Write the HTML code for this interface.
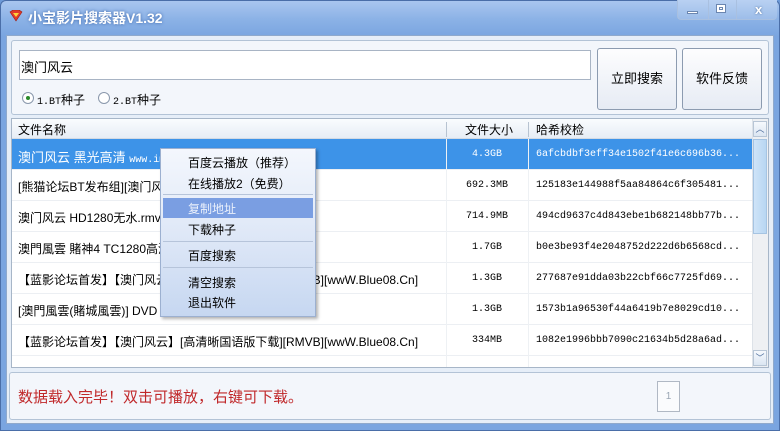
<!DOCTYPE html>
<html><head><meta charset="utf-8"><style>
*{margin:0;padding:0;box-sizing:border-box}
body{width:780px;height:431px;overflow:hidden;background:#6d9ad8;font-family:"Liberation Sans","Noto Sans CJK SC",sans-serif;font-size:12px;color:#000;position:relative}
.abs{position:absolute}
#win{left:0;top:0;width:780px;height:431px;border-radius:6px 6px 0 0;background:linear-gradient(#a9c6ef 0,#8cb2e6 18px,#7aa5e0 36px,#7aa5e0 100%);border:1px solid #4a6ea8}
#title{left:28px;top:8px;color:#fff;font-weight:bold;font-size:14px;text-shadow:0 0 3px #3a64a8}
#client{left:6px;top:35px;width:768px;height:389px;background:#e6eef8;border:1px solid #8fa9cc}
.panel{background:#f3f6fb;border:1px solid #b3c3d6;border-radius:3px}
.btn{background:linear-gradient(#fdfdfe,#e6ebf4);border:1px solid #8c9bb0;border-radius:3px;font-size:13px;text-align:center;line-height:60px}
.row{left:12px;width:740px;height:31px;border-bottom:1px solid #eceff3;background:#fff}
.row span{position:absolute;top:8px;white-space:nowrap}
.c1{left:6px}.c2{left:434px;width:82px;text-align:center;font-family:"Liberation Mono",monospace;font-size:10px;top:10px!important}
.c3{left:524px;font-family:"Liberation Mono",monospace;font-size:10px;top:10px!important}
.sel{background:#3d93e8;color:#fff}
.m{left:27px;font-size:12px;position:absolute}
</style></head><body>
<div id="win" class="abs"></div>
<svg class="abs" style="left:9px;top:10px" width="14" height="12" viewBox="0 0 14 12"><path d="M1 2 L4 0 H10 L13 2 L7 11 Z" fill="#e03a2a" stroke="#9a1a10" stroke-width=".6"/><path d="M4 3 H10 L7 7 Z" fill="#ffd23a"/></svg>
<div id="title" class="abs">小宝影片搜索器V1.32</div>
<div class="abs" style="left:677px;top:0;width:100px;height:20px;border-left:1px solid #a9c0e0;border-bottom:1px solid #a9c0e0;border-radius:0 0 4px 4px;background:linear-gradient(#b9d1f2,#9dbde9)"></div>
<div class="abs" style="left:708px;top:0;width:1px;height:20px;background:#a9c0e0"></div>
<div class="abs" style="left:736px;top:0;width:1px;height:20px;background:#a9c0e0"></div>
<div class="abs" style="left:687px;top:11px;width:11px;height:3px;background:#fff;border:1px solid #6b86b0"></div>
<div class="abs" style="left:716px;top:4px;width:10px;height:9px;border:1px solid #6b86b0;background:#fff"><div style="margin:2px;width:4px;height:3px;border:1px solid #6b86b0"></div></div>
<div class="abs" style="left:755px;top:2px;color:#fff;font-weight:bold;font-size:13px;text-shadow:0 0 2px #50709f">x</div>
<div id="client" class="abs"></div>
<div class="abs panel" style="left:11px;top:40px;width:758px;height:75px"></div>
<div class="abs" style="left:19px;top:50px;width:572px;height:30px;background:#fff;border:1px solid #a8b4c4"></div>
<div class="abs" style="left:21px;top:57px;font-size:13px">澳门风云</div>
<div class="abs" style="left:22px;top:92px;width:12px;height:12px;border-radius:50%;border:1px solid #8a98ac;background:#fff"><div style="margin:3px;width:4px;height:4px;border-radius:50%;background:#2a8a2a"></div></div>
<div class="abs" style="left:37px;top:91px;font-size:12px"><span style="font-family:'Liberation Mono';font-size:10px">1.BT</span>种子</div>
<div class="abs" style="left:98px;top:92px;width:12px;height:12px;border-radius:50%;border:1px solid #8a98ac;background:#fff"></div>
<div class="abs" style="left:113px;top:91px;font-size:12px"><span style="font-family:'Liberation Mono';font-size:10px">2.BT</span>种子</div>
<div class="abs btn" style="left:597px;top:48px;width:80px;height:62px">立即搜索</div>
<div class="abs btn" style="left:682px;top:48px;width:80px;height:62px">软件反馈</div>
<div class="abs" style="left:11px;top:118px;width:758px;height:250px;background:#fff;border:1px solid #a7b6c8"></div>
<div class="abs" style="left:12px;top:119px;width:740px;height:20px;background:linear-gradient(#fafcfe,#e7edf5);border-bottom:1px solid #d2dae4"></div>
<div class="abs" style="left:18px;top:121px">文件名称</div>
<div class="abs" style="left:446px;top:122px;width:1px;height:15px;background:#b7c3d1"></div>
<div class="abs" style="left:465px;top:121px">文件大小</div>
<div class="abs" style="left:528px;top:122px;width:1px;height:15px;background:#b7c3d1"></div>
<div class="abs" style="left:536px;top:121px">哈希校检</div>
<div class="abs row sel" style="top:139px"><span class="c1" style="font-size:13px">澳门风云 黑光高清 <span style="position:static;font-family:'Liberation Mono';font-size:10px">www.im</span></span><span class="c2">4.3GB</span><span class="c3">6afcbdbf3eff34e1502f41e6c696b36...</span></div>
<div class="abs row" style="top:170px"><span class="c1">[熊猫论坛BT发布组][澳门风</span><span class="c2">692.3MB</span><span class="c3">125183e144988f5aa84864c6f305481...</span></div>
<div class="abs row" style="top:201px"><span class="c1">澳门风云 HD1280无水.rmvb</span><span class="c2">714.9MB</span><span class="c3">494cd9637c4d843ebe1b682148bb77b...</span></div>
<div class="abs row" style="top:232px"><span class="c1">澳門風雲 賭神4 TC1280高清</span><span class="c2">1.7GB</span><span class="c3">b0e3be93f4e2048752d222d6b6568cd...</span></div>
<div class="abs row" style="top:263px"><span class="c1">【蓝影论坛首发】【澳门风云】[高清晰国语版下载][RMVB][wwW.Blue08.Cn]</span><span class="c2">1.3GB</span><span class="c3">277687e91dda03b22cbf66c7725fd69...</span></div>
<div class="abs row" style="top:294px"><span class="c1">[澳門風雲(賭城風雲)] DVD</span><span class="c2">1.3GB</span><span class="c3">1573b1a96530f44a6419b7e8029cd10...</span></div>
<div class="abs row" style="top:325px"><span class="c1">【蓝影论坛首发】【澳门风云】[高清晰国语版下载][RMVB][wwW.Blue08.Cn]</span><span class="c2">334MB</span><span class="c3">1082e1996bbb7090c21634b5d28a6ad...</span></div>
<div class="abs" style="left:446px;top:139px;width:1px;height:228px;background:#eef1f4"></div>
<div class="abs" style="left:528px;top:139px;width:1px;height:228px;background:#eef1f4"></div>
<div class="abs" style="left:752px;top:119px;width:16px;height:248px;background:#eef0f3;border-left:1px solid #dde2e8"></div>
<div class="abs" style="left:753px;top:121px;width:14px;height:16px;background:linear-gradient(#f6f9fd,#dbe6f2);border:1px solid #b8c6d6;font-size:9px;text-align:center;color:#4a6a9a;line-height:14px">︿</div>
<div class="abs" style="left:753px;top:139px;width:14px;height:95px;background:linear-gradient(90deg,#cfe4f8,#b8d6f2);border:1px solid #a6c4e2"></div>
<div class="abs" style="left:753px;top:350px;width:14px;height:16px;background:linear-gradient(#f6f9fd,#dbe6f2);border:1px solid #b8c6d6;font-size:9px;text-align:center;color:#4a6a9a;line-height:14px">﹀</div>
<div class="abs panel" style="left:9px;top:372px;width:762px;height:48px"></div>
<div class="abs" style="left:18px;top:386px;font-size:15px;color:#c0282a">数据载入完毕！双击可播放，右键可下载。</div>
<div class="abs" style="left:657px;top:381px;width:23px;height:31px;border:1px solid #b0b8c4;background:#fafbfd;color:#9aa6b4;font-size:10px;text-align:center;line-height:29px">1</div>
<div class="abs" style="left:160px;top:148px;width:156px;height:169px;background:linear-gradient(#f4f7fd,#dfe8f7 50%,#c6d7f1);border:1px solid #9cb0d0;box-shadow:2px 2px 3px rgba(0,0,0,.3)">
<div class="m" style="top:5px">百度云播放（推荐）</div>
<div class="m" style="top:26px">在线播放2（免费）</div>
<div style="position:absolute;left:2px;top:45px;width:150px;height:1px;background:#b6c4da"></div>
<div style="position:absolute;left:2px;top:49px;width:150px;height:20px;background:#7a9ee2"></div>
<div class="m" style="top:51px;color:#eaf0fb">复制地址</div>
<div class="m" style="top:72px">下载种子</div>
<div style="position:absolute;left:2px;top:92px;width:150px;height:1px;background:#b6c4da"></div>
<div class="m" style="top:98px">百度搜索</div>
<div style="position:absolute;left:2px;top:118px;width:150px;height:1px;background:#b6c4da"></div>
<div class="m" style="top:125px">清空搜索</div>
<div class="m" style="top:145px">退出软件</div>
</div>
</body></html>
